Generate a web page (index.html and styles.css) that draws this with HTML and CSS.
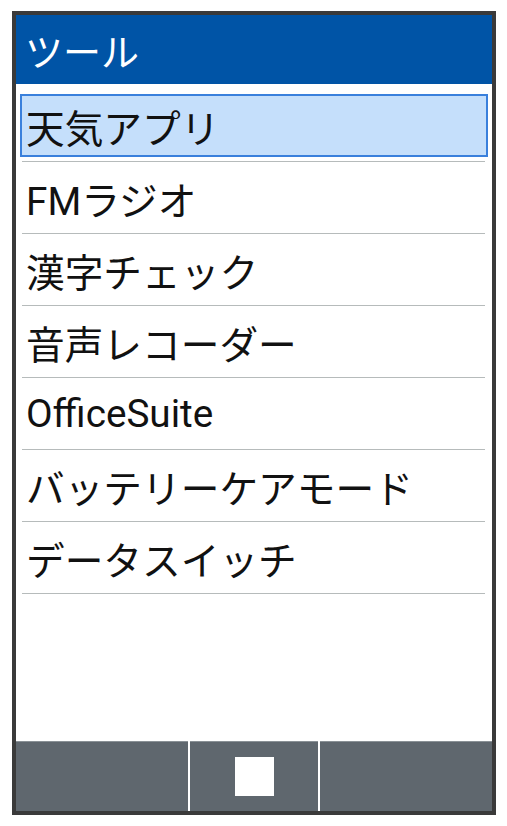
FILE: index.html
```html
<!DOCTYPE html>
<html lang="ja">
<head>
<meta charset="utf-8">
<link rel="stylesheet" href="styles.css">
</head>
<body>
<div class="frame">
  <div class="header">ツール</div>
  <div class="list">
    <div class="row"><div class="cell selected">天気アプリ</div><div class="line"></div></div>
    <div class="row"><div class="cell">FMラジオ</div><div class="line"></div></div>
    <div class="row"><div class="cell">漢字チェック</div><div class="line"></div></div>
    <div class="row"><div class="cell">音声レコーダー</div><div class="line"></div></div>
    <div class="row"><div class="cell">OfficeSuite</div><div class="line"></div></div>
    <div class="row"><div class="cell">バッテリーケアモード</div><div class="line"></div></div>
    <div class="row"><div class="cell">データスイッチ</div><div class="line"></div></div>
  </div>
  <div class="footer">
    <div class="key key-side"></div>
    <div class="key key-mid"><span class="square"></span></div>
    <div class="key key-side"></div>
  </div>
</div>
</body>
</html>
```
FILE: styles.css
```css
html, body {
  margin: 0;
  padding: 0;
  background: #ffffff;
}
body {
  width: 507px;
  height: 826px;
  font-family: Roboto, "Noto Sans CJK JP", sans-serif;
}
.frame {
  box-sizing: border-box;
  margin: 11px 11px 0 12px;
  width: 484px;
  height: 804px;
  border: 4px solid #3a3a3a;
  display: flex;
  flex-direction: column;
  background: #ffffff;
}
.header {
  height: 69px;
  background: #0054a6;
  color: #ffffff;
  font-size: 38px;
  display: flex;
  align-items: center;
  padding-left: 9px;
  flex-shrink: 0;
}
.list {
  flex: 1;
  padding-top: 6px;
}
.row {
  height: 72px;
  display: flex;
  flex-direction: column;
}
.cell {
  box-sizing: border-box;
  flex: 1;
  margin: 4px 4px 4px 4px;
  padding-left: 4px;
  display: flex;
  align-items: center;
  font-size: 38.7px;
  color: #111111;
  border: 2px solid transparent;
  white-space: nowrap;
}
.cell.selected {
  background: #c5dffb;
  border-color: #3a80dc;
}
.line {
  height: 1px;
  margin: 0 7px 0 6px;
  background: #b6bbbb;
}
.footer {
  height: 70px;
  flex-shrink: 0;
  display: flex;
  gap: 2px;
  background: #ffffff;
}
.key {
  background: #5f676e;
  border-top: 1px solid #8a9196;
  display: flex;
  align-items: center;
  justify-content: center;
}
.key-side {
  width: 172px;
}
.key-mid {
  flex: 1;
}
.square {
  width: 39px;
  height: 39px;
  background: #ffffff;
}
```
